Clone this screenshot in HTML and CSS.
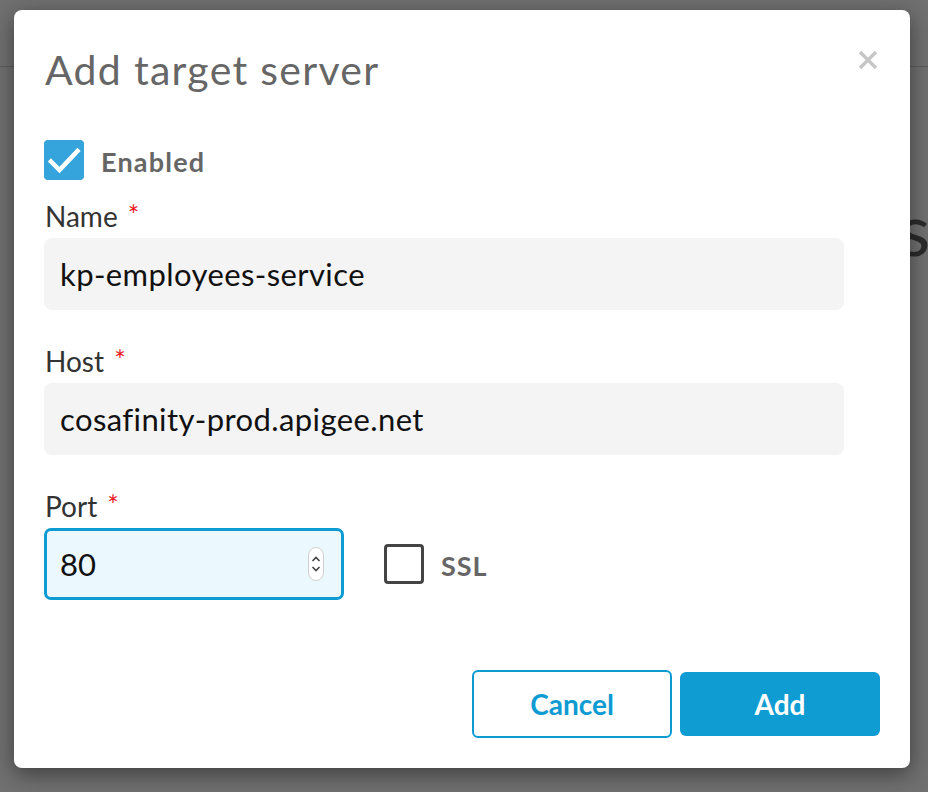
FILE: index.html
```html
<!DOCTYPE html>
<html>
<head>
<meta charset="utf-8">
<link rel="stylesheet" href="styles.css">
</head>
<body>
<div class="page">
  <div class="page-header"></div>
  <div class="page-title">servers</div>
</div>
<div class="modal">
  <button class="close" aria-label="Close">
    <svg width="20" height="20" viewBox="0 0 20 20"><path d="M2 2 L18 18 M18 2 L2 18" stroke="#c6c6c6" stroke-width="3.4" fill="none"/></svg>
  </button>
  <h1 class="title">Add target server</h1>
  <div class="check-row enabled-row">
    <span class="box box-on">
      <svg width="40" height="40" viewBox="0 0 40 40"><path d="M7 21.5 L15.5 30 L33.5 11" stroke="#fff" stroke-width="4.5" fill="none" stroke-linecap="square"/></svg>
    </span>
    <span class="check-label">Enabled</span>
  </div>
  <div class="field">
    <label class="label">Name <span class="req">*</span></label>
    <div class="input">kp-employees-service</div>
  </div>
  <div class="field">
    <label class="label">Host <span class="req">*</span></label>
    <div class="input">cosafinity-prod.apigee.net</div>
  </div>
  <div class="field">
    <label class="label">Port <span class="req">*</span></label>
    <div class="port-row">
      <div class="input port">
        <span class="port-value">80</span>
        <svg class="spin" width="16" height="34" viewBox="0 0 16 34"><rect x="0.5" y="0.5" width="15" height="33" rx="7.5" fill="#fff" stroke="#d0d0d0"/><path d="M4.5 14 L8 10.5 L11.5 14 M4.5 20 L8 23.5 L11.5 20" stroke="#444" stroke-width="1.6" fill="none"/></svg>
      </div>
      <div class="check-row">
        <span class="box box-off"></span>
        <span class="check-label ssl">SSL</span>
      </div>
    </div>
  </div>
  <div class="actions">
    <button class="btn btn-cancel">Cancel</button>
    <button class="btn btn-add">Add</button>
  </div>
</div>
</body>
</html>
```

FILE: styles.css
```css
html, body {
  margin: 0;
  padding: 0;
}
body {
  width: 928px;
  height: 792px;
  overflow: hidden;
  background: #707070;
  font-family: Lato, "Open Sans", sans-serif;
  position: relative;
}
.page-header {
  height: 66px;
  border-bottom: 1px solid #5c5c5c;
}
.page-title {
  padding-left: 899px;
  margin-top: 121px;
  font-size: 72px;
  line-height: 80px;
  color: #2b2b2b;
  white-space: nowrap;
}
.modal {
  position: absolute;
  left: 14px;
  top: 10px;
  width: 836px;
  height: 692px;
  padding: 36px 30px 30px 30px;
  background: #fff;
  border-radius: 8px;
  box-shadow: 0 6px 22px rgba(0,0,0,0.45);
  display: flex;
  flex-direction: column;
}
.close {
  position: absolute;
  top: 40px;
  right: 32px;
  width: 20px;
  height: 20px;
  padding: 0;
  border: 0;
  background: none;
  display: block;
}
.close svg { display: block; }
.title {
  margin: 0 0 0 1px;
  font-size: 41px;
  letter-spacing: 1.3px;
  line-height: 48px;
  font-weight: 400;
  color: #666;
}
.check-row {
  display: flex;
  align-items: center;
  gap: 17px;
  height: 40px;
}
.enabled-row {
  margin-top: 46px;
}
.box {
  width: 40px;
  height: 40px;
  box-sizing: border-box;
  border-radius: 4px;
  flex: none;
}
.box svg { display: block; }
.box-on {
  background: #36a4dc;
}
.box-off {
  border: 3px solid #444;
  border-radius: 4px;
}
.check-label {
  font-size: 27px;
  letter-spacing: 1.2px;
  font-weight: 700;
  color: #666;
  line-height: 40px;
  padding-top: 3px;
}
.check-label.ssl {
  letter-spacing: 0.9px;
}
.field {
  display: flex;
  flex-direction: column;
  width: 800px;
}
.enabled-row + .field {
  margin-top: 19px;
}
.field + .field {
  margin-top: 34px;
}
.label {
  font-size: 28px;
  line-height: 34px;
  color: #333;
  margin-left: 1px;
}
.req {
  color: #e8191f;
  font-size: 27px;
  line-height: 28px;
  vertical-align: top;
  position: relative;
  top: 2px;
  margin-left: 3px;
}
.input {
  margin-top: 5px;
  height: 72px;
  box-sizing: border-box;
  background: #f4f4f4;
  border-radius: 8px;
  padding-left: 16px;
  display: flex;
  align-items: center;
  font-size: 31px;
  letter-spacing: 0.4px;
  color: #111;
}
.port-row {
  display: flex;
  align-items: center;
  gap: 40px;
  margin-top: 5px;
}
.input.port {
  margin-top: 0;
  width: 300px;
  height: 72px;
  border: 3px solid #0e9bd2;
  border-radius: 7px;
  background: #ebf8fe;
  padding-left: 13px;
  padding-right: 17px;
  justify-content: space-between;
  letter-spacing: 0;
}
.spin { display: block; }
.actions {
  margin-top: auto;
  display: flex;
  justify-content: flex-end;
  align-items: center;
  gap: 8px;
}
.btn {
  width: 200px;
  border-radius: 6px;
  font-family: Lato, "Open Sans", sans-serif;
  font-size: 28px;
  font-weight: 700;
  padding: 0;
  box-sizing: border-box;
}
.btn-cancel {
  height: 68px;
  border: 2px solid #0e9bd2;
  background: #fff;
  color: #0e9bd2;
}
.btn-add {
  height: 64px;
  border: 0;
  background: #0e9cd3;
  color: #fff;
}
```
